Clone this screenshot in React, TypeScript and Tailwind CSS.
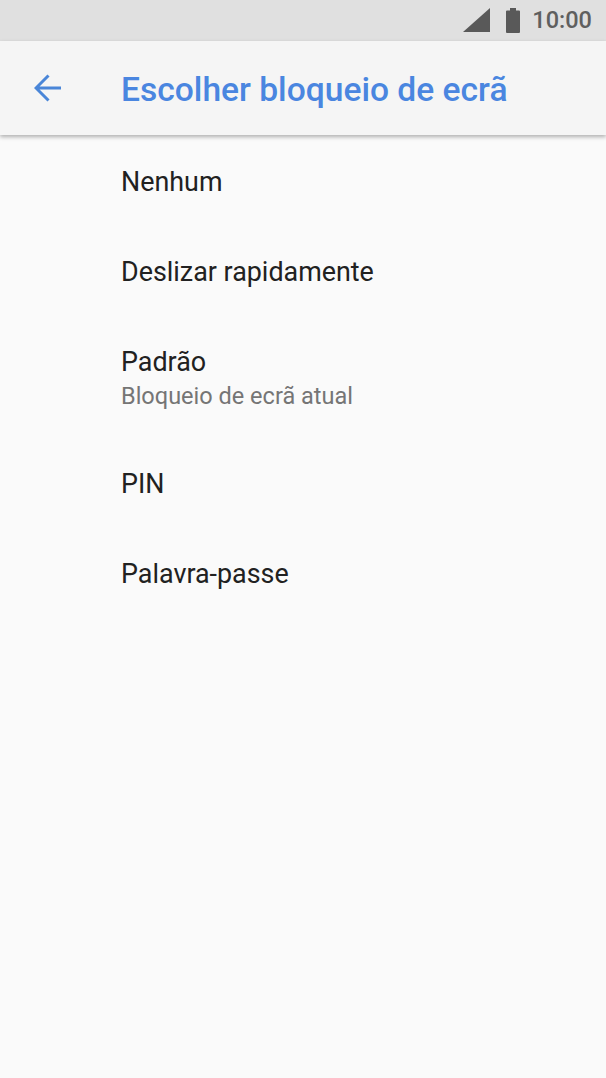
export default function App() {
  const font = "font-['Roboto',sans-serif]";
  return (
    <div className={`w-[606px] h-[1078px] bg-[#fafafa] flex flex-col ${font}`}>
      <div className="h-[41px] bg-[#e0e0e0] flex items-center justify-end pr-[14px] text-[#5f5f5f]">
        <svg width="27" height="24" viewBox="0 0 27 24" className="mr-[16px] mt-[-1px]"><path d="M0 24 L27 24 L27 0 Z" fill="#595959" /></svg>
        <svg width="14" height="25" viewBox="0 0 14 25" className="mr-[12px] mt-[-1px]"><path d="M4 0h6v2.500h3a1 1 0 0 1 1 1V24a1 1 0 0 1-1 1H1a1 1 0 0 1-1-1V3.500a1 1 0 0 1 1-1h3z" fill="#595959" /></svg>
        <span className="text-[23.52px] font-medium leading-none mt-[1px]">10:00</span>
      </div>
      <div className="h-[94px] bg-[#f5f5f5] shadow-[0_2px_4px_rgba(0,0,0,0.3)] flex items-center relative z-10">
        <div className="w-[121px] pl-[34px]">
          <svg width="27" height="28" viewBox="0 0 27 28" fill="none" stroke="#4a86d8" strokeWidth="3"><path d="M27 14H2M14.500 1.500 2 14l12.500 12.500" /></svg>
        </div>
        <span className="text-[33.6px] font-medium text-[#4a86e0] mt-[5px]">Escolher bloqueio de ecrã</span>
      </div>
      <div className="pl-[121px] text-[#212121] text-[26.88px] flex flex-col">
        <div className="h-[91px] flex items-center pt-[3px]">Nenhum</div>
        <div className="h-[90px] flex items-center pt-[2px]">Deslizar rapidamente</div>
        <div className="h-[122px] flex flex-col justify-center pt-[4px]">
          <span className="leading-[32px]">Padrão</span>
          <span className="text-[23.52px] leading-[32px] mt-[2px] text-[#757575]">Bloqueio de ecrã atual</span>
        </div>
        <div className="h-[90px] flex items-center pt-[3px]">PIN</div>
        <div className="h-[91px] flex items-center pt-[1px]">Palavra-passe</div>
      </div>
    </div>
  );
}
